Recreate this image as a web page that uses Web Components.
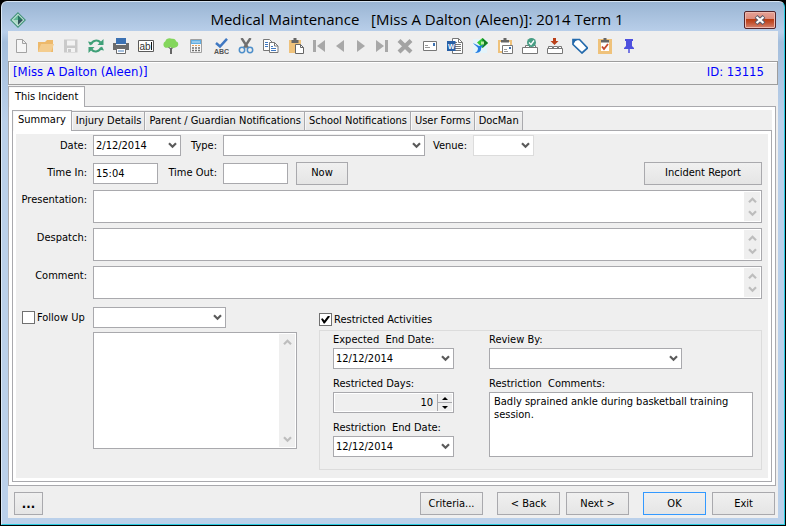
<!DOCTYPE html>
<html lang="en">
<head>
<meta charset="utf-8">
<meta name="viewport" content="width=device-width, initial-scale=1">
<title>Medical Maintenance</title>
<style>
  html { background: #000; }
  body {
    margin: 0;
    min-height: 100vh;
    display: flex;
    font: 11px/14px "DejaVu Sans Condensed", "DejaVu Sans", sans-serif;
    color: #000;
    --face: #efefef;
    --line: #a9a9ad;
  }
  .row { display: flex; align-items: center; }
  .form { display: flex; flex-direction: column; gap: 5px; padding: 1px 6px 8px 0; }
  .form > .row { height: 24px; }
  .form > .row.first { height: 21px; }
  .now { width: 52px; margin-left: 8px; }
  .report { width: 118px; margin-left: auto; }
  .lower { display: flex; gap: 22px; padding: 3px 0 0 6px; }
  .follow { display: grid; grid-template-columns: 71px 204px; row-gap: 4px; align-content: start; }
  .restricted { flex: 1; padding-top: 5px; }
  .group {
    display: grid;
    grid-template-columns: 121px 1fr;
    column-gap: 35px;
    border: 1px solid #dcdcdc;
    margin-top: 3px;
    padding: 2px 8px 12px 13px;
  }
  .group .col { display: flex; flex-direction: column; gap: 8px; }
  .group .grow { flex: 1; }
</style>
</head>
<body>

<app-window caption="Medical Maintenance   [Miss A Dalton (Aleen)]: 2014 Term 1">
  <tool-bar></tool-bar>
  <record-banner><span>[Miss A Dalton (Aleen)]</span><span slot="id">ID: 13115</span></record-banner>
  <tab-panel class="outer" tabs="This Incident">
    <tab-panel class="inner" tabs="Summary|Injury Details|Parent / Guardian Notifications|School Notifications|User Forms|DocMan">
      <div class="form">
        <div class="row first">
          <form-select label="Date:" value="2/12/2014" style="--label: 71px; --width: 88px"></form-select>
          <form-select label="Type:" style="--label: 36px; --width: 202px"></form-select>
          <form-select label="Venue:" style="--label: 42px; --width: 61px; --line: #dcdcdc"></form-select>
        </div>
        <div class="row">
          <form-input label="Time In:" value="15:04" style="--label: 71px; --width: 65px"></form-input>
          <form-input label="Time Out:" style="--label: 59px; --width: 65px"></form-input>
          <push-button class="now">Now</push-button>
          <push-button class="report">Incident Report</push-button>
        </div>
        <form-memo label="Presentation:" style="--label: 71px; --height: 33px"></form-memo>
        <form-memo label="Despatch:" style="--label: 71px; --height: 33px"></form-memo>
        <form-memo label="Comment:" style="--label: 71px; --height: 33px"></form-memo>
        <div class="lower">
          <div class="follow">
            <check-box label="Follow Up"></check-box>
            <form-select name="Follow up type" style="--width: 133px"></form-select>
            <span></span>
            <form-memo name="Follow up notes" style="--height: 117px"></form-memo>
          </div>
          <div class="restricted">
            <check-box label="Restricted Activities" checked></check-box>
            <div class="group">
              <div class="col">
                <form-select stacked label="Expected  End Date:" value="12/12/2014" style="--width: 121px"></form-select>
                <form-spin label="Restricted Days:" value="10"></form-spin>
                <form-select stacked label="Restriction  End Date:" value="12/12/2014" style="--width: 121px"></form-select>
              </div>
              <div class="col">
                <form-select stacked label="Review By:" style="--width: 193px"></form-select>
                <form-memo class="grow" stacked plain label="Restriction  Comments:" value="Badly sprained ankle during basketball training session."></form-memo>
              </div>
            </div>
          </div>
        </div>
      </div>
    </tab-panel>
  </tab-panel>
  <button-bar>
    <push-button slot="left" style="--w: 29px" strong>...</push-button>
    <push-button style="--w: 63px">Criteria...</push-button>
    <push-button style="--w: 63px; margin-left: 8px">&lt; Back</push-button>
    <push-button style="--w: 63px">Next &gt;</push-button>
    <push-button style="--w: 63px; --line: #3399ff; margin-left: 8px">OK</push-button>
    <push-button style="--w: 63px">Exit</push-button>
  </button-bar>
</app-window>

<script>
const BASE = `
  :host, *, *::before, *::after { box-sizing: border-box; }
  button, input, select, textarea { font: inherit; color: inherit; margin: 0; border-radius: 0; outline: 0; }
  label { white-space: pre; }
`;

const DOWN = `<svg class="arrow" width="9" height="7" viewBox="0 0 9 7"><path d="M1 1.2 4.5 4.7 8 1.2" fill="none" stroke="currentColor" stroke-width="2.2"/></svg>`;
const UP = `<svg class="arrow" width="9" height="7" viewBox="0 0 9 7"><path d="M1 5.3 4.5 1.8 8 5.3" fill="none" stroke="currentColor" stroke-width="2.2"/></svg>`;

// Toolbar icons, all on a 16x16 grid
const ICONS = {
  'New': '<path d="M3.5 1.5h6l4 4v9h-10zM9.5 1.5v4h4" fill="#f6f6f6" stroke="#a3a3a3"/>',
  'Open': '<path d="M0 14V4h7l2-2h6v12z" fill="#edb96b"/><path d="M3 6h13l-3 8H0z" fill="#f4cd8f"/>',
  'Save': '<path d="M1 1.5h13.5v13H1z" fill="#cacaca"/><path d="M4 2.5h8v5H4zM4 10h8v4H4z" fill="#f3f3f3"/><path d="M5 11h3v3H5z" fill="#cacaca"/>',
  'Refresh': '<path d="M3 6.500a5.500 5.500 0 0 1 9.500-2M13 9.500a5.500 5.500 0 0 1-9.500 2" fill="none" stroke="#3fa078" stroke-width="2"/><path d="M15.500 1v6H9.500zM.5 15V9H6.500z" fill="#3fa078"/><path d="M0 3.500l2 4 3.500-3zM16 12.500l-2-4-3.500 3z" fill="#3fa078"/>',
  'Print': '<path d="M3 0h10v6H3z" fill="#3c71b2"/><path d="M0 5h3v2h10V5h3v7H0z" fill="#6b6b6b"/><path d="M3.500 10.500h9v5h-9z" fill="#fff" stroke="#6b6b6b"/><path d="M5 13h6" stroke="#4d80bd"/>',
  'Rename': '<path d="M.5 2.500h15v11H.5z" fill="#fff" stroke="#5a5a5a"/><text x="1.500" y="11.500" font-family="Liberation Sans" font-size="10" fill="#333">ab</text><path d="M13.500 4v8" stroke="#111"/>',
  'Tree': '<path d="M9 16H7v-5L4 8.500h1.500L7.500 10l3-2H12L9 11z" fill="#666"/><path d="M7 9C3 11 0 9 .5 6c0-2 2-2.500 2-3C3 0 7-.5 9 .8c3-.5 4 1.500 4 2.500 3 .7 3 5 0 6-2 1-4 1-5 0z" fill="#84d65c"/>',
  'Calculator': '<path d="M2.500 1.500h11v13h-11z" fill="#f7f7f7" stroke="#a0a0a0"/><path d="M3 2h10v4H3z" fill="#62aee2"/><path d="M4 4h8" stroke="#c8e4f7"/><path d="M4 7.500h2M7 7.500h2M10 7.500h2" stroke="#e0a05c"/><path d="M4 10h2M7 10h2M10 10h2M4 12.500h2M7 12.500h2M10 12.500h2" stroke="#6f6f6f" stroke-width="1.500"/>',
  'Spelling': '<path d="M3 5l4 3.500L14 .8" fill="none" stroke="#3f78c2" stroke-width="2.500"/><text x="1" y="16" font-family="Liberation Sans" font-size="7" font-weight="bold" fill="#555">ABC</text>',
  'Cut': '<path d="M3.500 0 10 10M12.500 0 6 10" stroke="#707070" stroke-width="2.400"/><circle cx="4" cy="12" r="2.700" fill="none" stroke="#4e8fca" stroke-width="1.500"/><circle cx="12" cy="12" r="2.700" fill="none" stroke="#4e8fca" stroke-width="1.500"/>',
  'Copy': '<path d="M.5 1.500h6l3 3v8h-9z" fill="#fff" stroke="#777"/><path d="M2 4.500h3M2 6.500h3M2 8.500h3" stroke="#3f78c2"/><path d="M6.500 4.500h5l3.500 3.500v6.500H6.500z" fill="#fff" stroke="#777"/><path d="M11.500 4.500v3.500H15" fill="none" stroke="#777"/><path d="M8 8.500h2M8 10.500h5M8 12.500h5" stroke="#3f78c2"/>',
  'Paste': '<path d="M1 2h12v13H1z" fill="#efc27b"/><path d="M3.500 2h2V0h3v2h2v3h-7z" fill="#666"/><path d="M7.500 6.500h5l3 3v6h-8z" fill="#fff" stroke="#666"/><path d="M12.500 6.500v3h3" fill="none" stroke="#666"/>',
  'First': '<path d="M2 2h3v12H2zM14 2v12L6 8z" fill="#a8a8a8"/>',
  'Previous': '<path d="M12 2v12L4 8z" fill="#a8a8a8"/>',
  'Next': '<path d="M4 2v12l8-6z" fill="#a8a8a8"/>',
  'Last': '<path d="M2 2v12l8-6zM11 2h3v12h-3z" fill="#a8a8a8"/>',
  'Delete': '<path d="M2 2.500 14 14M14 2.500 2 14" stroke="#a3a3a3" stroke-width="4.200"/>',
  'Mail': '<path d="M1.500 3.500h13v9h-13z" fill="#fff" stroke="#777"/><path d="M11 5h2v3h-2z" fill="#3c71b2"/><path d="M3 7.500h3M3 9.500h5" stroke="#999"/>',
  'Word': '<path d="M5.500.5h6l4 4v11h-10z" fill="#fff" stroke="#777"/><path d="M11.500.5v4h4M8 4.500h2M8 6.500h6M8 8.500h6M8 10.500h6M8 12.500h6" fill="none" stroke="#777"/><path d="M0 3h8.500v10H0z" fill="#285fa5"/><text x="1" y="10.500" font-family="Liberation Sans" font-size="7" font-weight="bold" fill="#fff">W</text>',
  'Route': '<path d="M1 1h14v14H1z" fill="#e4f4fb"/><path d="M5 4.500 10.500 0 16 5l-5.500 5z" fill="#32c735"/><path d="M10.500 0v10L16 5z" fill="#137d22"/><path d="M9 3.500h3v3H9z" fill="#b7efa2"/><path d="M1 5l6 3 5-1c-1 1-3 2-3 4 0 3-3 4-6 4 2-1 3-3 3-5-1-2-4-3-5-5z" fill="#237ce2"/>',
  'Paste mail': '<path d="M1 2h14v13H1z" fill="#efc27b"/><path d="M3 4h10v9H3z" fill="#fff"/><path d="M4 2h2.500V0h3v2H12v2.500H4z" fill="#666"/><path d="M5.500 7.500h10v8h-10z" fill="#fff" stroke="#777"/><path d="M12 9h2v2h-2z" fill="#3c71b2"/><path d="M7 11.500h3M7 13.500h4" stroke="#999"/>',
  'Approve': '<path d="M.5 9.500h15v6H.5zM3.500 9.500v-2h4v2M9.500 9.500v-2h4v2" fill="#fff" stroke="#777"/><circle cx="9.500" cy="4.500" r="4.500" fill="#479d84"/><path d="M7 4.500l2 2 3-4" fill="none" stroke="#fff" stroke-width="1.300"/>',
  'Import': '<path d="M.5 10.500h15v5H.5zM1.500 10.500v-2h4v2M6.500 10.500v-2h4v2M11.500 10.500v-2h3v2" fill="#fff" stroke="#777"/><path d="M6 0h3v3h2.500l-4 4-4-4H6z" fill="#ba3f18"/>',
  'Tag': '<path d="M1 1.500h6.500l8 8.500-5.500 5-9-8.500z" fill="#fff" stroke="#246aac" stroke-width="1.700"/><path d="M1 1h5L1 6z" fill="#246aac"/><circle cx="4" cy="4" r="1" fill="#fff"/>',
  'Tasks': '<path d="M1 1h14v15H1z" fill="#efc27b"/><path d="M4 3h8v10H4z" fill="#fff"/><path d="M4 2h2.500V0h3v2H12v2.500H4z" fill="#666"/><path d="M5 8.500l2 2.500 4-5" fill="none" stroke="#c5492d" stroke-width="1.800"/>',
  'Pin': '<path d="M3 1h8v2h-1v5l2 2v1H2v-1l2-2V3H3z" fill="#4e50de"/><path d="M7 10v5" stroke="#4e50de" stroke-width="1.500"/>'
};

class Base extends HTMLElement {
  connectedCallback() {
    this.attachShadow({ mode: 'open' });
    this.shadowRoot.innerHTML = `<style>${BASE}</style>` + this.render();
  }

  attr(name) {
    return this.getAttribute(name) || '';
  }

  labelMarkup() {
    return this.attr('label') ? `<label for="c">${this.attr('label')}</label>` : '';
  }
}

// Shared box of every labelled field
const FIELD = `
  :host { display: flex; align-items: center; gap: 6px; min-width: 0; }
  :host([stacked]) { flex-direction: column; align-items: flex-start; gap: 1px; }
  :host(:not([stacked])) label { width: var(--label, auto); flex: none; text-align: right; }
`;

class AppWindow extends Base {
  render() {
    return `
      <style>
        :host {
          flex: 1;
          display: flex;
          flex-direction: column;
          margin: 1px;
          padding: 0 6px 6px;
          border: 1px solid #29cbe0;
          border-left-color: #dce9f6;
          border-top-color: #d5e3f1;
          border-radius: 6px 6px 0 0;
          background: linear-gradient(#9ab5d3, #b9cfea 30px, #a4bedc 40px, #bad0ea 120px);
        }
        header { display: flex; align-items: center; height: 29px; padding: 0 2px; }
        h1 {
          flex: 1;
          margin: 0;
          padding: 4px 0 0 64px;
          font: 15px/20px "Open Sans", "Noto Sans", sans-serif;
          text-align: center;
          white-space: pre;
        }
        .close {
          display: grid;
          place-items: center;
          width: 32px;
          height: 18px;
          margin-top: 6px;
          padding: 0;
          border: 1px solid #54252b;
          border-radius: 2px;
          background: linear-gradient(#e6a195, #dd8c7c 45%, #b93c12 46%, #c24f2c 65%, #d58470);
          box-shadow: inset 0 0 0 1px #eeb9ae;
        }
        main { flex: 1; display: flex; flex-direction: column; background: var(--face); }
        .logo { margin-top: 6px; }
      </style>
      <header>
        <svg class="logo" width="16" height="16" viewBox="0 0 16 16">
          <path d="M8 .8 15.200 8 8 15.200.8 8z" fill="#d0eae0" stroke="#47967d" stroke-width="1.200"/>
          <path d="M8 3v5H3z" fill="#62b796"/><path d="M8 3l5 5H8z" fill="#267460"/>
          <path d="M3 8h5v5z" fill="#a8d7c5"/><path d="M8 8h5l-5 5z" fill="#31525a"/>
        </svg>
        <h1>${this.attr('caption')}</h1>
        <button class="close" aria-label="Close">
          <svg width="12" height="10" viewBox="0 0 12 10"><path d="M2 1.500 10 8.500M10 1.500 2 8.500" stroke="#5c5c6b" stroke-width="4.200"/><path d="M2.500 2 9.500 8M9.500 2 2.500 8" stroke="#fff" stroke-width="2.200"/></svg>
        </button>
      </header>
      <main><slot></slot></main>`;
  }
}

class ToolBar extends Base {
  render() {
    const narrow = ['First', 'Previous', 'Next', 'Last'];
    const buttons = Object.entries(ICONS).map(([name, art]) => `
      <button aria-label="${name}" class="${narrow.includes(name) ? 'narrow' : ''}">
        <svg width="16" height="16" viewBox="0 0 16 16">${art}</svg>
      </button>`).join('');
    return `
      <style>
        :host { display: flex; height: 30px; }
        button { display: grid; place-items: center; width: 25px; padding: 0; border: 0; background: none; }
        .narrow { width: 21px; }
      </style>
      ${buttons}`;
  }
}

class RecordBanner extends Base {
  render() {
    return `
      <style>
        :host {
          display: flex;
          justify-content: space-between;
          align-items: center;
          height: 24px;
          padding: 0 13px 2px 4px;
          border: 1px solid #9d9d9d;
          box-shadow: inset 1px 1px #fff;
          color: #00f;
          font-size: 13px;
        }
      </style>
      <slot></slot><slot name="id"></slot>`;
  }
}

class TabPanel extends Base {
  render() {
    const tabs = this.attr('tabs').split('|').map((name, i) =>
      `<button role="tab" aria-selected="${i === 0}">${name}</button>`).join('');
    return `
      <style>
        :host { flex: 1; display: flex; flex-direction: column; }
        :host(.outer) { margin: 1px 2px 0 0; }
        .tabs { display: flex; align-items: flex-end; }
        button {
          height: 19px;
          padding: 0 3px 0 4px;
          border: 1px solid var(--line);
          border-width: 1px 1px 0 0;
          background: linear-gradient(#f0f0f0, #e7e7e7);
          box-shadow: inset 1px 1px #f8f8f8;
          white-space: nowrap;
        }
        button[aria-selected="true"] {
          position: relative;
          height: 21px;
          margin-bottom: -1px;
          padding: 0 5px 2px;
          border-left-width: 1px;
          background: #fff;
        }
        :host(.outer) button[aria-selected="true"] { padding: 0 6px; }
        .panel {
          flex: 1;
          display: flex;
          flex-direction: column;
          border: 1px solid var(--line);
          padding: 3px;
          background: #fff;
        }
        .page { flex: 1; display: flex; flex-direction: column; background: var(--face); }
      </style>
      <div class="tabs" role="tablist">${tabs}</div>
      <div class="panel" role="tabpanel"><div class="page"><slot></slot></div></div>`;
  }
}

class FormSelect extends Base {
  render() {
    const name = this.attr('name') ? `aria-label="${this.attr('name')}"` : '';
    return `
      <style>
        ${FIELD}
        .box { display: grid; align-items: center; width: var(--width); max-width: 100%; }
        .box > * { grid-area: 1 / 1; }
        select {
          appearance: none;
          width: 100%;
          height: 21px;
          padding: 0 16px 0 2px;
          border: 1px solid var(--line);
          background: #fff;
        }
        .arrow { justify-self: end; margin-right: 4px; color: #5b5b5b; pointer-events: none; }
      </style>
      ${this.labelMarkup()}
      <div class="box"><select id="c" ${name}><option>${this.attr('value')}</option></select>${DOWN}</div>`;
  }
}

class FormInput extends Base {
  render() {
    return `
      <style>
        ${FIELD}
        input { width: var(--width); height: 21px; padding: 0 2px; border: 1px solid var(--line); background: #fff; }
      </style>
      ${this.labelMarkup()}
      <input id="c" type="text" value="${this.attr('value')}">`;
  }
}

class FormMemo extends Base {
  render() {
    const name = this.attr('name') ? `aria-label="${this.attr('name')}"` : '';
    const bar = this.hasAttribute('plain') ? '' : `<div class="bar">${UP}${DOWN}</div>`;
    return `
      <style>
        ${FIELD}
        :host { align-items: flex-start; }
        label { padding-top: 3px; }
        :host([stacked]) label { padding-top: 0; }
        .box {
          flex: 1;
          display: flex;
          min-width: 0;
          height: var(--height, auto);
          border: 1px solid var(--line);
          padding: 1px;
          background: #fff;
        }
        :host([stacked]) .box { width: 100%; }
        textarea { flex: 1; min-width: 0; padding: 1px 3px; border: 0; background: none; line-height: 13px; resize: none; overflow: hidden; }
        .bar {
          display: flex;
          flex-direction: column;
          justify-content: space-between;
          align-items: center;
          width: 16px;
          padding: 5px 0 4px;
          background: var(--face);
          color: #bdbdbd;
        }
      </style>
      ${this.labelMarkup()}
      <div class="box"><textarea id="c" ${name}>${this.attr('value')}</textarea>${bar}</div>`;
  }
}

class FormSpin extends Base {
  render() {
    return `
      <style>
        :host { display: flex; flex-direction: column; gap: 1px; }
        .box { display: flex; height: 21px; padding: 1px; border: 1px solid var(--line); background: #fff; }
        input { flex: 1; min-width: 0; padding: 0 4px; border: 0; background: var(--face); text-align: right; }
        .spin { display: flex; flex-direction: column; width: 15px; gap: 1px; background: var(--line); border-left: 1px solid var(--line); }
        button { flex: 1; display: grid; place-items: center; min-height: 0; padding: 0; border: 0; background: var(--face); }
      </style>
      ${this.labelMarkup()}
      <div class="box">
        <input id="c" type="text" value="${this.attr('value')}" readonly>
        <div class="spin">
          <button aria-label="More"><svg width="6" height="3"><path d="M3 0 6 3H0z"/></svg></button>
          <button aria-label="Less"><svg width="6" height="3"><path d="M3 3 0 0h6z"/></svg></button>
        </div>
      </div>`;
  }
}

class CheckBox extends Base {
  render() {
    return `
      <style>
        :host { display: flex; align-items: center; gap: 2px; height: 21px; }
        :host([checked]) { height: 15px; }
        input {
          appearance: none;
          display: grid;
          place-items: center;
          width: 13px;
          height: 13px;
          border: 1px solid #707070;
          background: #fff;
        }
        input:checked::before {
          content: "";
          width: 9px;
          height: 8px;
          background: #000;
          clip-path: polygon(0 45%, 18% 35%, 38% 62%, 80% 0, 100% 12%, 42% 100%, 30% 100%);
        }
      </style>
      <input id="c" type="checkbox" ${this.hasAttribute('checked') ? 'checked' : ''}>
      ${this.labelMarkup()}`;
  }
}

class PushButton extends Base {
  render() {
    return `
      <style>
        :host { display: block; width: var(--w); }
        button {
          display: block;
          width: 100%;
          height: 23px;
          padding: 0;
          border: 1px solid var(--line);
          background: linear-gradient(#f0f0f0, #e5e5e5);
          white-space: nowrap;
        }
        :host([strong]) button { font-weight: bold; font-size: 13px; }
      </style>
      <button><slot></slot></button>`;
  }
}

class ButtonBar extends Base {
  render() {
    return `
      <style>
        :host { display: flex; align-items: center; gap: 6px; padding: 6px 3px 3px 6px; }
        slot[name="left"] { display: block; margin-right: auto; }
      </style>
      <slot name="left"></slot><slot></slot>`;
  }
}

customElements.define('app-window', AppWindow);
customElements.define('tool-bar', ToolBar);
customElements.define('record-banner', RecordBanner);
customElements.define('tab-panel', TabPanel);
customElements.define('form-select', FormSelect);
customElements.define('form-input', FormInput);
customElements.define('form-memo', FormMemo);
customElements.define('form-spin', FormSpin);
customElements.define('check-box', CheckBox);
customElements.define('push-button', PushButton);
customElements.define('button-bar', ButtonBar);
</script>
</body>
</html>
